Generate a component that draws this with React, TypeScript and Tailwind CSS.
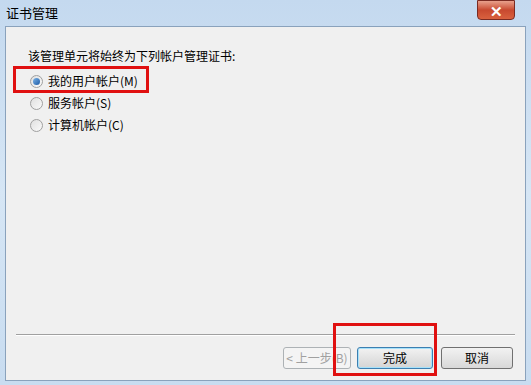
import React from "react";

const font = { fontFamily: '"Noto Sans CJK SC", "Liberation Sans", sans-serif' };

function Radio({ checked }: { checked?: boolean }) {
  return (
    <span className="relative inline-flex h-[13px] w-[13px] items-center justify-center rounded-full border border-[#a0a0a0] bg-gradient-to-br from-[#e0e0e0] to-[#fafafa]">
      {checked && <span className="h-[7px] w-[7px] rounded-full bg-gradient-to-br from-[#7ab3e6] to-[#1b5aa6]" />}
    </span>
  );
}

export default function App() {
  return (
    <div className="relative h-[385px] w-[531px] overflow-hidden bg-gradient-to-b from-[#c4d9ef] via-[#d6e6f5] to-[#c8dcf0]" style={font}>
      {/* title bar */}
      <div className="flex h-[26px] items-center justify-between pl-[6px] pr-[16px]">
        <span className="text-[13px] text-black">证书管理</span>
        <div className="mb-[6px] flex h-[20px] w-[38px] items-center justify-center self-start rounded-b-[4px] border border-[#7a2b22] bg-gradient-to-b from-[#e8a08c] via-[#c8492f] to-[#d9613f] text-[15px] font-bold leading-none text-white">
          ✕
        </div>
      </div>
      {/* client area */}
      <div className="mx-[5px] flex h-[355px] flex-col border border-[#8aa2bc] bg-[#f0f0f0] text-[12px] text-black">
        <div className="flex flex-1 flex-col pl-[22px] pt-[20px]">
          <div className="h-[18px] leading-[18px]">该管理单元将始终为下列帐户管理证书:</div>
          <div className="mt-[6px] flex h-[20px] items-center gap-[5px] pl-[2px]">
            <Radio checked />
            <span>我的用户帐户(M)</span>
          </div>
          <div className="mt-[2px] flex h-[20px] items-center gap-[5px] pl-[2px]">
            <Radio />
            <span>服务帐户(S)</span>
          </div>
          <div className="mt-[2px] flex h-[20px] items-center gap-[5px] pl-[2px]">
            <Radio />
            <span>计算机帐户(C)</span>
          </div>
        </div>
        <div className="mx-[10px] border-t border-b border-t-[#a0a0a0] border-b-white" />
        <div className="flex h-[44px] items-center justify-end gap-[6px] pr-[12px] pt-[0px]">
          <div className="flex h-[22px] w-[68px] items-center justify-center rounded-[3px] border border-[#adb2b5] bg-[#f4f4f4] text-[#a0a0a0]">&lt; 上一步(B)</div>
          <div className="flex h-[22px] w-[76px] items-center justify-center rounded-[3px] border border-[#3c7fb1] bg-gradient-to-b from-[#f2f2f2] to-[#d4d4d4] shadow-[inset_0_0_0_1px_#a6e1fa]">完成</div>
          <div className="ml-[2px] flex h-[22px] w-[72px] items-center justify-center rounded-[3px] border border-[#707070] bg-gradient-to-b from-[#f2f2f2] to-[#d8d8d8]">取消</div>
        </div>
      </div>
      {/* red highlight boxes */}
      <div className="absolute left-[13px] top-[66px] h-[27px] w-[136px] border-[3px] border-[#e01010]" />
      <div className="absolute left-[333px] top-[323px] h-[53px] w-[104px] border-[3px] border-[#e01010]" />
    </div>
  );
}
